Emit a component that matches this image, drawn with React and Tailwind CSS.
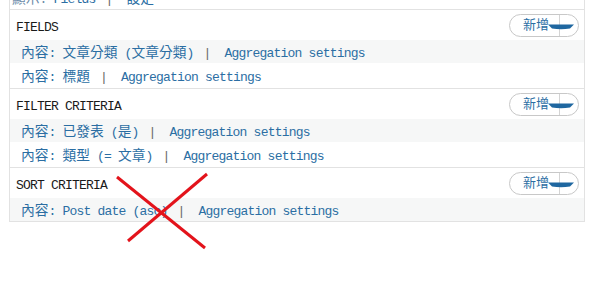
const cjk = /([\u2E80-\u9FFF\uF900-\uFAFF\uFF00-\uFFEF]+)/;

const Txt = ({ text }) =>
  text.split(cjk).map((s, i) =>
    i % 2 ? (
      <span key={i} className="text-[13.75px] tracking-normal">
        {s}
      </span>
    ) : (
      s
    )
  );

const AddButton = () => (
  <div className="relative h-[23px] w-[70px] rounded-full border border-[#c8c8c8] bg-white flex items-center pl-[13px] text-[#2b6ea3] tracking-normal">
    <span className="text-[13px] leading-none">新增</span>
    <span className="absolute left-[49px] top-0 bottom-0 w-px bg-[#d4d4d4]" />
    <svg
      className="absolute left-[38px] top-[9px]"
      width="26"
      height="6"
      viewBox="0 0 26 6"
    >
      <path d="M0 0.5 L26 0.5 L22 4.5 Q13 6 4 4.5 Z" fill="#1f67a0" />
    </svg>
  </div>
);

const Row = ({ label, gray }) => (
  <div
    className={
      gray
        ? "flex items-center h-[23px] bg-[#f6f7f7] pl-[11px] pt-[4px]"
        : "flex items-center h-[25px] bg-white pl-[11px] pt-[4px]"
    }
  >
    <span className="text-[#2b6ea3] whitespace-pre">
      <Txt text={label} />
    </span>
    <span className="ml-[10px] mr-[14px] text-[#666]">|</span>
    <a className="text-[#2b6ea3] whitespace-pre">Aggregation settings</a>
  </div>
);

const Header = ({ title }) => (
  <div className="flex items-center justify-between h-[30px] pl-[6px] pr-[5px]">
    <span className="text-[#1a1a1a] pt-[6px]">{title}</span>
    <AddButton />
  </div>
);

export default function App() {
  return (
    <div
      className="relative w-[589px] h-[290px] bg-white overflow-hidden text-[13px] tracking-[-0.8px] leading-[16px]"
      style={{ fontFamily: '"Liberation Mono", "Noto Sans CJK TC", monospace' }}
    >
      <div className="ml-[9px] w-[576px] border-l border-r border-b border-[#e2e2e2]">
        <div className="h-[9px] overflow-hidden pl-[2px]">
          <div className="-mt-[8px] flex text-[#2b6ea3] whitespace-pre">
            <span className="text-[#6a8aa8]">
              <Txt text="顯示: " />
            </span>
            <span>Fields</span>
            <span className="ml-[10px] mr-[14px] text-[#666]">|</span>
            <span>
              <Txt text="設定" />
            </span>
          </div>
        </div>
        <div className="border-t border-[#e2e2e2]">
          <Header title="FIELDS" />
          <Row label="內容: 文章分類 (文章分類)" gray />
          <Row label="內容: 標題" />
        </div>
        <div className="border-t border-[#e2e2e2]">
          <Header title="FILTER CRITERIA" />
          <Row label="內容: 已發表 (是)" gray />
          <Row label="內容: 類型 (= 文章)" />
        </div>
        <div className="border-t border-[#e2e2e2]">
          <Header title="SORT CRITERIA" />
          <Row label="內容: Post date (asc)" gray />
        </div>
      </div>
      <svg
        className="absolute left-0 top-0 pointer-events-none"
        width="589"
        height="290"
      >
        <line x1="117" y1="177" x2="205" y2="248" stroke="#e3131b" strokeWidth="3" />
        <line x1="207" y1="174" x2="128" y2="241" stroke="#e3131b" strokeWidth="3" />
      </svg>
    </div>
  );
}
